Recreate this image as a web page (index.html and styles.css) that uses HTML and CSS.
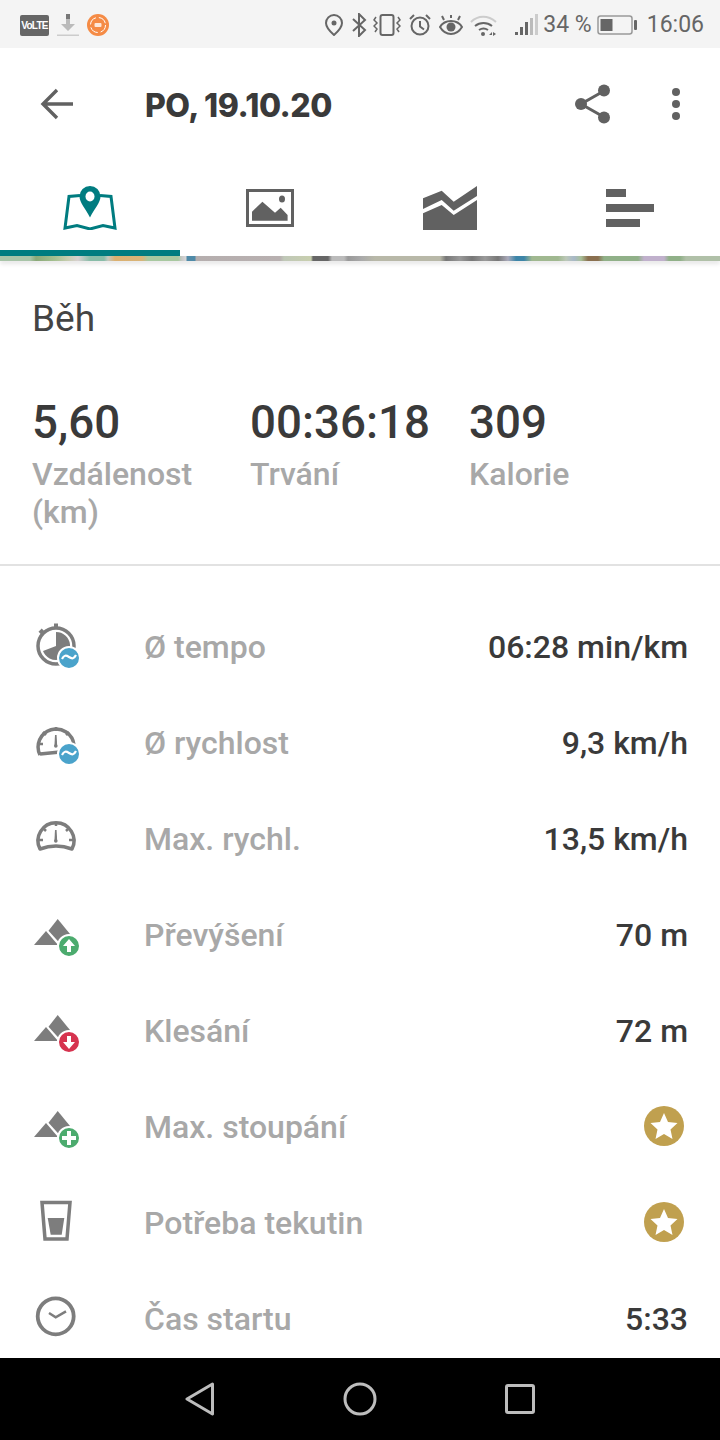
FILE: index.html
```html
<!DOCTYPE html>
<html lang="cs">
<head>
<meta charset="utf-8">
<title>PO, 19.10.20</title>
<link rel="stylesheet" href="styles.css">
</head>
<body>
<div class="phone">
  <header class="status">
    <div class="status-left">
      <span class="volte">VoLTE</span>
      <svg class="st-dl" viewBox="0 0 22 22"><rect x="9" y="0" width="4" height="5" fill="#777"/><path d="M9 5h4v5h5l-7 7-7-7h5z" fill="#bbb"/><rect y="20.500" width="22" height="1.500" fill="#ccc"/></svg>
      <svg class="st-rec" viewBox="0 0 22 22"><circle cx="11" cy="11" r="11" fill="#f58b45"/><circle cx="11" cy="11" r="7.500" fill="none" stroke="#fff" stroke-width="1" stroke-dasharray="9 3"/><rect x="7.500" y="9" width="7" height="4" rx="1" fill="#fff" opacity=".8"/></svg>
    </div>
    <div class="status-right">
      <svg class="st-pin" viewBox="0 0 18 22"><path d="M9 1a8 8 0 0 0-8 8c0 5 8 12 8 12s8-7 8-12a8 8 0 0 0-8-8z" fill="none" stroke="#666" stroke-width="2"/><circle cx="9" cy="9" r="2.500" fill="#666"/></svg>
      <svg class="st-bt" viewBox="0 0 16 24"><path d="M2 6l12 11-6 6V1l6 6L2 18" fill="none" stroke="#666" stroke-width="2"/></svg>
      <svg class="st-vib" viewBox="0 0 28 22"><rect x="7.500" y="1" width="13" height="20" rx="2" fill="none" stroke="#666" stroke-width="2"/><path d="M3 3l-2 3 3 3-3 3 3 3-2 3M25 3l2 3-3 3 3 3-3 3 2 3" fill="none" stroke="#666" stroke-width="1.500"/></svg>
      <svg class="st-alarm" viewBox="0 0 22 22"><circle cx="11" cy="12" r="8.500" fill="none" stroke="#666" stroke-width="2"/><path d="M11 7v5.500l4 3M1 5l4-4M21 5l-4-4" fill="none" stroke="#666" stroke-width="2"/></svg>
      <svg class="st-eye" viewBox="0 0 24 22"><path d="M1 13c3-5 7-6 11-6s8 1 11 6c-3 5-7 7-11 7s-8-2-11-7z" fill="none" stroke="#666" stroke-width="2"/><circle cx="12" cy="13" r="4.500" fill="#666"/><path d="M5 6L3 2M12 4V1M19 6l2-4" stroke="#666" stroke-width="2"/></svg>
      <svg class="st-wifi" viewBox="0 0 27 22"><path d="M1 8c7-7 17-7 25 0" fill="none" stroke="#ccc" stroke-width="2"/><path d="M5 12c5-4 12-4 17 0M9 16c3-2 6-2 9 0" fill="none" stroke="#666" stroke-width="2"/><circle cx="13" cy="20" r="2" fill="#666"/><path d="M19 21l3-3v3zM23 18v4l3-2z" fill="#666"/></svg>
      <svg class="st-signal" viewBox="0 0 23 22"><rect x="0" y="18" width="3" height="3" fill="#666"/><rect x="5" y="13" width="3" height="8" fill="#666"/><rect x="10" y="8" width="3" height="13" fill="#666"/><rect x="15" y="4" width="3" height="17" fill="#bbb"/><rect x="20" y="0" width="3" height="21" fill="#ccc"/></svg>
      <span class="st-text st-pct">34 %</span>
      <svg class="st-bat" viewBox="0 0 40 20"><rect x="1" y="1" width="34" height="18" rx="2.500" fill="none" stroke="#999" stroke-width="1.500"/><rect x="3.500" y="4" width="12" height="12" fill="#666"/><rect x="37" y="5" width="3" height="10" rx="1" fill="#666"/></svg>
      <span class="st-text st-clock">16:06</span>
    </div>
  </header>

  <div class="appbar">
    <svg class="back" viewBox="0 0 34 32"><path d="M33 16H3M17 2L3 16l14 14" fill="none" stroke="#616161" stroke-width="3.400"/></svg>
    <h1 class="title">PO, 19.10.20</h1>
    <svg class="share" viewBox="0 0 38 40"><path d="M29 7.500L7 20l22 12.500" fill="none" stroke="#616161" stroke-width="3"/><circle cx="30" cy="6.500" r="6" fill="#616161"/><circle cx="7" cy="20" r="6" fill="#616161"/><circle cx="30" cy="33.500" r="6" fill="#616161"/></svg>
    <svg class="more" viewBox="0 0 8 32"><circle cx="4" cy="4" r="4" fill="#616161"/><circle cx="4" cy="16" r="4" fill="#616161"/><circle cx="4" cy="28" r="4" fill="#616161"/></svg>
  </div>

  <nav class="tabs">
    <div class="tab tab-active">
      <svg class="tab-icon" viewBox="0 0 54 44"><path d="M17 9.500L6 10.500 2 42l12-2.500 13 3.500 13-3.500 12 2.500-4-31.500L37 9.500" fill="none" stroke="#007c80" stroke-width="3"/><path d="M27 0a10.500 10.500 0 0 0-10.500 10.500c0 6 6 12 10.500 21 4.500-9 10.500-15 10.500-21A10.500 10.500 0 0 0 27 0z" fill="#007c80"/><ellipse cx="27" cy="10.500" rx="4.500" ry="5" fill="#fff"/></svg>
    </div>
    <div class="tab">
      <svg class="tab-icon icon-photo" viewBox="0 0 48 38"><rect x="1.500" y="1.500" width="45" height="35" fill="none" stroke="#616161" stroke-width="3"/><path d="M6 22.700L16.400 12.700 29 23.700l5.700-5 6.900 7.300v5.700H6z" fill="#616161"/><ellipse cx="36" cy="10" rx="3" ry="3.500" fill="#616161"/></svg>
    </div>
    <div class="tab">
      <svg class="tab-icon" viewBox="0 0 54 44"><path d="M0 12.300L18.700 4.700 30.700 15.700 54 0V10L30.700 24.700 18.700 14 0 23z" fill="#616161"/><path d="M0 27.300L18.700 19 30.700 29 54 14V44H0z" fill="#616161"/></svg>
    </div>
    <div class="tab">
      <svg class="tab-icon icon-bars" viewBox="0 0 48 38"><rect width="20" height="8" fill="#616161"/><rect y="15" width="48" height="8" fill="#616161"/><rect y="30" width="34" height="8" fill="#616161"/></svg>
    </div>
  </nav>
  <div class="mapstrip"></div>

  <main class="content">
    <h2 class="activity">Běh</h2>
    <section class="stats">
      <div class="stat"><div class="stat-value">5,60</div><div class="stat-label">Vzdálenost (km)</div></div>
      <div class="stat"><div class="stat-value">00:36:18</div><div class="stat-label">Trvání</div></div>
      <div class="stat"><div class="stat-value">309</div><div class="stat-label">Kalorie</div></div>
    </section>
    <ul class="rows">
      <li class="row">
        <svg class="row-icon" viewBox="0 0 48 48"><circle cx="24" cy="24" r="18" fill="none" stroke="#7d7d7d" stroke-width="3.500"/><rect x="22" y="1.500" width="4" height="5" fill="#7d7d7d"/><path d="M6.500 9.700l3.200-3.200 3.200 3.200-3.200 3.200z" fill="#7d7d7d"/><path d="M24 10A14 14 0 1 1 11 29L24 24z" fill="#7d7d7d"/><circle cx="37" cy="36" r="11" fill="#4aa3cb" stroke="#fff" stroke-width="2"/><path d="M30 37c2-4 4-4 7-2s5 2 7-2" fill="none" stroke="#fff" stroke-width="2.200"/></svg>
        <span class="row-label">Ø tempo</span><span class="row-value">06:28 min/km</span>
      </li>
      <li class="row">
        <svg class="row-icon" viewBox="0 0 48 48"><path d="M8 37A18 18 0 1 1 42 27M8 36l20-2" fill="none" stroke="#7d7d7d" stroke-width="3.500"/><path d="M24 9v4M6 26h5M11 14l3 3M37 14l-3 3" stroke="#7d7d7d" stroke-width="2.500"/><path d="M23 17h1.600l.6 11h-2.800z" fill="#7d7d7d"/><circle cx="23.800" cy="28" r="1.800" fill="#7d7d7d"/><circle cx="37" cy="36" r="11" fill="#4aa3cb" stroke="#fff" stroke-width="2"/><path d="M30 37c2-4 4-4 7-2s5 2 7-2" fill="none" stroke="#fff" stroke-width="2.200"/></svg>
        <span class="row-label">Ø rychlost</span><span class="row-value">9,3 km/h</span>
      </li>
      <li class="row">
        <svg class="row-icon" viewBox="0 0 48 48"><path d="M8 35A18 18 0 1 1 40 35Q24 29 8 35z" fill="none" stroke="#7d7d7d" stroke-width="3.500" stroke-linejoin="round"/><path d="M24 8v4M6 26h5M37 26h5M11 14l3 3M37 14l-3 3" stroke="#7d7d7d" stroke-width="2.500"/><path d="M23 16h1.600l.6 11h-2.800z" fill="#7d7d7d"/><circle cx="23.800" cy="27" r="1.800" fill="#7d7d7d"/></svg>
        <span class="row-label">Max. rychl.</span><span class="row-value">13,5 km/h</span>
      </li>
      <li class="row">
        <svg class="row-icon" viewBox="0 0 48 48"><path d="M14 21L26 35H2z" fill="#7d7d7d"/><path d="M25.700 9L38 24V34H28.500L16.500 20.700z" fill="#7d7d7d"/><circle cx="37" cy="36" r="11" fill="#4cab6e" stroke="#fff" stroke-width="2"/><path d="M37 29l6 7h-4v6h-4v-6h-4z" fill="#fff"/></svg>
        <span class="row-label">Převýšení</span><span class="row-value">70 m</span>
      </li>
      <li class="row">
        <svg class="row-icon" viewBox="0 0 48 48"><path d="M14 21L26 35H2z" fill="#7d7d7d"/><path d="M25.700 9L38 24V34H28.500L16.500 20.700z" fill="#7d7d7d"/><circle cx="37" cy="36" r="11" fill="#d6334f" stroke="#fff" stroke-width="2"/><path d="M37 43l-6-7h4v-6h4v6h4z" fill="#fff"/></svg>
        <span class="row-label">Klesání</span><span class="row-value">72 m</span>
      </li>
      <li class="row">
        <svg class="row-icon" viewBox="0 0 48 48"><path d="M14 21L26 35H2z" fill="#7d7d7d"/><path d="M25.700 9L38 24V34H28.500L16.500 20.700z" fill="#7d7d7d"/><circle cx="37" cy="36" r="11" fill="#4cab6e" stroke="#fff" stroke-width="2"/><path d="M35 29h4v5h5v4h-5v5h-4v-5h-5v-4h5z" fill="#fff"/></svg>
        <span class="row-label">Max. stoupání</span>
        <svg class="star" viewBox="0 0 40 40"><circle cx="20" cy="20" r="20" fill="#c0a04f"/><path d="M20 7l4 9 9.500 1-7 6.500 2 9.500-8.500-5-8.500 5 2-9.500-7-6.500 9.500-1z" fill="#fff"/></svg>
      </li>
      <li class="row">
        <svg class="row-icon" viewBox="0 0 48 48"><path d="M10 4.500h28l-3 36.500H13z" fill="none" stroke="#7d7d7d" stroke-width="3.500"/><path d="M15.700 20h16.600l-2.600 16.700H18.700z" fill="#7d7d7d"/></svg>
        <span class="row-label">Potřeba tekutin</span>
        <svg class="star" viewBox="0 0 40 40"><circle cx="20" cy="20" r="20" fill="#c0a04f"/><path d="M20 7l4 9 9.500 1-7 6.500 2 9.500-8.500-5-8.500 5 2-9.500-7-6.500 9.500-1z" fill="#fff"/></svg>
      </li>
      <li class="row">
        <svg class="row-icon" viewBox="0 0 48 48"><circle cx="23.700" cy="22.300" r="18" fill="none" stroke="#7d7d7d" stroke-width="3.800"/><path d="M17 19l6.700 4.300L34 17.300" fill="none" stroke="#7d7d7d" stroke-width="2.500"/></svg>
        <span class="row-label">Čas startu</span><span class="row-value">5:33</span>
      </li>
    </ul>
  </main>

  <footer class="navbar">
    <svg class="nav-tri" viewBox="0 0 30 34"><path d="M27.500 2L2 17l25.500 15z" fill="none" stroke="#bdbdbd" stroke-width="3" stroke-linejoin="round"/></svg>
    <svg class="nav-circle" viewBox="0 0 34 34"><circle cx="17" cy="17" r="15" fill="none" stroke="#bdbdbd" stroke-width="3"/></svg>
    <svg class="nav-square" viewBox="0 0 34 34"><rect x="3.500" y="3.500" width="27" height="27" rx="1.500" fill="none" stroke="#bdbdbd" stroke-width="3"/></svg>
  </footer>
</div>
</body>
</html>
```
FILE: styles.css
```css
* { box-sizing: border-box; }
html, body { margin: 0; padding: 0; }
body { background: #fff; font-family: Roboto, "Liberation Sans", sans-serif; }
.phone { width: 720px; height: 1440px; display: flex; flex-direction: column; overflow: hidden; background: #fff; }

.status { height: 48px; flex: none; background: #f4f4f4; display: flex; justify-content: space-between; align-items: center; padding: 2px 16px 0 20px; }
.status-left, .status-right { display: flex; align-items: center; }
.status svg { display: block; flex: none; }
.volte { width: 29px; height: 21px; background: #666; border-radius: 2px; color: #fff; font: 700 10px/21px "Liberation Sans", sans-serif; text-align: center; letter-spacing: -.7px; overflow: hidden; }
.st-dl { width: 22px; height: 22px; margin-left: 8px; }
.st-rec { width: 22px; height: 22px; margin-left: 8px; }
.st-pin { width: 18px; height: 22px; }
.st-bt { width: 16px; height: 24px; margin-left: 8px; }
.st-vib { width: 28px; height: 22px; margin-left: 6px; }
.st-alarm { width: 22px; height: 22px; margin-left: 8px; }
.st-eye { width: 24px; height: 22px; margin-left: 8px; }
.st-wifi { width: 27px; height: 22px; margin-left: 7px; }
.st-signal { width: 23px; height: 22px; margin-left: 18px; }
.st-text { color: #666; font-size: 23px; line-height: 30px; }
.st-pct { margin-left: 5px; }
.st-bat { width: 40px; height: 20px; margin-left: 5px; }
.st-clock { margin-left: 10px; }

.appbar { height: 112px; flex: none; display: flex; align-items: center; padding: 0 40px; }
.back { width: 34px; height: 32px; flex: none; display: block; }
.title { margin: 3px 0 0 71px; flex: 1; font: 800 32px/40px Inter, "Open Sans", sans-serif; color: #3a3a3a; letter-spacing: -.5px; }
.share { width: 38px; height: 40px; flex: none; display: block; margin-right: 60px; }
.more { width: 8px; height: 32px; flex: none; display: block; }

.tabs { height: 96px; flex: none; display: grid; grid-template-columns: repeat(4, 180px); }
.tab { display: flex; justify-content: center; padding-top: 26px; height: 96px; }
.tab-active { border-bottom: 6px solid #007c80; }
.tab-icon { width: 54px; height: 44px; display: block; }
.icon-photo, .icon-bars { width: 48px; height: 38px; margin-top: 3px; }

.mapstrip { height: 5px; flex: none; position: relative; z-index: 1; box-shadow: 0 3px 4px rgba(0,0,0,.1);
  background: linear-gradient(90deg,
    #a8c4a8 0, #a8c4a8 30px, #8aa878 36px, #a5c090 55px, #c8cdb0 68px, #d8d0d0 78px, #88bca8 90px, #88bca8 104px, #c4c8c0 108px,
    #dcb070 115px, #d8b478 142px, #a8c8a0 148px, #a8c8a0 178px, #c8c8c8 182px, #d8d8d8 186px,
    #4f8aa8 187px, #4f8aa8 195px, #b5aeae 196px, #b8b0b0 280px, #c0c8b8 284px, #c8cfae 311px,
    #666 313px, #666 328px, #bbb 332px, #bbb 344px, #999 348px, #aaa 362px, #b8b8a8 375px, #b8b8a8 440px,
    #777 446px, #999 460px, #777 472px, #9a9a9a 485px, #777 498px, #aaaabb 508px,
    #3d85a8 516px, #3d85a8 524px, #a0b890 532px, #a0b890 558px, #bcc8b8 566px, #a8b8c8 574px, #a8c098 581px,
    #8a7050 588px, #8a7050 598px, #90b088 604px, #90b088 638px, #c0b0cc 644px, #c0b0cc 664px, #90b088 669px, #90b088 680px, #b0c0a8 686px, #b0c0a8 100%); }

.content { flex: 1; min-height: 0; overflow: hidden; }
.activity { margin: 0; padding: 37px 0 0 32px; font-size: 37px; line-height: 42px; font-weight: 400; color: #444; }

.stats { display: grid; grid-template-columns: 218px 219px 1fr; padding: 57px 0 0 32px; border-bottom: 2px solid #e2e2e2; height: 226px; margin-bottom: 32px; }
.stat-value { font-size: 45.7px; line-height: 52px; font-weight: 500; color: #3a3a3a; }
.stat-label { width: 180px; font-size: 32px; line-height: 38px; font-weight: 500; color: #a8a8a8; margin-top: 6px; }

.rows { list-style: none; margin: 0; padding: 0 32px; }
.row { height: 96px; display: flex; align-items: center; }
.row-icon { width: 48px; height: 48px; flex: none; display: block; margin-right: 64px; }
.row-label { flex: 1; font-size: 32px; font-weight: 500; color: #a8a8a8; padding-top: 2px; }
.row-value { font-size: 32px; font-weight: 500; color: #3a3a3a; padding-top: 2px; }
.star { width: 40px; height: 40px; display: block; flex: none; margin-right: 4px; }

.navbar { height: 82px; flex: none; background: #000; display: flex; align-items: center; padding-left: 185px; }
.nav-tri { width: 30px; height: 34px; display: block; flex: none; }
.nav-circle { width: 34px; height: 34px; display: block; flex: none; margin-left: 128px; }
.nav-square { width: 34px; height: 34px; display: block; flex: none; margin-left: 126px; }
```
